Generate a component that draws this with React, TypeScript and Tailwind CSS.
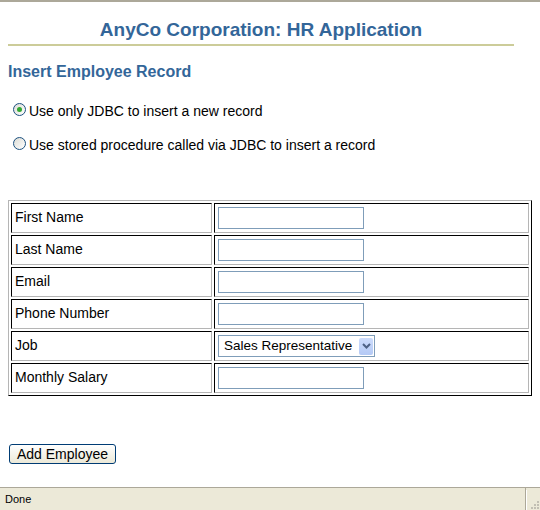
import { useState } from "react";

const fields = ["First Name", "Last Name", "Email", "Phone Number", "Job", "Monthly Salary"];

const Radio = ({ checked }: { checked: boolean }) => (
  <span className="w-[13px] h-[13px] rounded-full border border-[#1c5180] bg-gradient-to-br from-[#dcdcd5] to-white flex items-center justify-center shrink-0">
    {checked && <span className="w-[5px] h-[5px] rounded-full bg-[#31a831]" />}
  </span>
);

const JobSelect = () => (
  <div className="w-[157px] h-[22px] border border-[#7f9db9] bg-white flex items-center justify-between pl-[5px] pr-[1px]">
    <span className="text-[13.5px] leading-[16px] text-black">Sales Representative</span>
    <span className="w-[14px] h-[17px] rounded-[2px] bg-gradient-to-b from-[#cddcfc] to-[#b4c9f5] flex items-center justify-center">
      <svg width="9" height="6" viewBox="0 0 9 6">
        <path d="M1 1 L4.5 4.5 L8 1" fill="none" stroke="#4d6185" strokeWidth="2" />
      </svg>
    </span>
  </div>
);

const App = () => {
  const [mode, setMode] = useState("jdbc");

  return (
    <div className="w-[540px] h-[510px] flex font-['Liberation_Sans',Arial,sans-serif] text-black overflow-hidden">
      <div className="flex-1 flex flex-col border-t-2 border-[#aca899] bg-white">
        {/* Page content */}
        <div className="flex-1 px-[8px]">
          <div className="w-[506px]">
            <h1 className="mt-[17px] text-center text-[19px] leading-[22px] font-bold text-[#336699]">
              AnyCo Corporation: HR Application
            </h1>
            <div className="mt-[3px] h-[2px] bg-[#cccc99]" />
          </div>

          <h2 className="mt-[17px] text-[16px] leading-[18px] font-bold text-[#336699]">
            Insert Employee Record
          </h2>

          <div className="mt-[22px] flex flex-col gap-[18px] text-[14px] leading-[16px]">
            {[
              { id: "jdbc", label: "Use only JDBC to insert a new record" },
              { id: "proc", label: "Use stored procedure called via JDBC to insert a record" },
            ].map((o) => (
              <label key={o.id} className="flex items-start gap-[3px] pl-[5px] cursor-default" onClick={() => setMode(o.id)}>
                <Radio checked={mode === o.id} />
                <span>{o.label}</span>
              </label>
            ))}
          </div>

          {/* Form table */}
          <div className="mt-[47px] w-[524px] border border-t-[#b5b5b5] border-l-[#b5b5b5] border-b-black border-r-black p-[2px] grid grid-cols-[201px_315px] gap-[2px]">
            {fields.map((f) => (
              <div key={f} className="contents">
                <div className="h-[30px] border border-t-black border-l-black border-b-[#b5b5b5] border-r-[#b5b5b5] px-[3px] flex items-center text-[14px] leading-[16px] pb-[2px]">
                  {f}
                </div>
                <div className="h-[30px] border border-t-black border-l-black border-b-[#b5b5b5] border-r-[#b5b5b5] px-[3px] flex items-center">
                  {f === "Job" ? (
                    <JobSelect />
                  ) : (
                    <input type="text" className="w-[146px] h-[22px] border border-[#7f9db9] bg-white outline-none" />
                  )}
                </div>
              </div>
            ))}
          </div>

          <button className="mt-[48px] ml-[1px] w-[107px] h-[20px] rounded-[3px] border border-[#003c74] bg-gradient-to-b from-white to-[#ece9d8] text-[14px] leading-[16px] text-black">
            Add Employee
          </button>
        </div>

        {/* Status bar */}
        <div className="h-[23px] border-t border-[#aca899] bg-[#ece9d8] flex items-stretch">
          <span className="flex-1 pl-[5px] pt-[5px] text-[11px] leading-[13px]">Done</span>
          <div className="w-[15px] border-l border-l-[#aca899] flex items-end justify-end relative">
            <div className="absolute left-0 top-[2px] bottom-0 w-px bg-white" />
            <svg width="11" height="8" viewBox="0 0 11 8" className="mb-[1px]">
              <rect x="8" y="0" width="2" height="2" fill="#c2bfb3" />
              <rect x="5" y="3" width="2" height="2" fill="#c2bfb3" />
              <rect x="8" y="3" width="2" height="2" fill="#c2bfb3" />
              <rect x="2" y="6" width="2" height="2" fill="#c2bfb3" />
              <rect x="5" y="6" width="2" height="2" fill="#c2bfb3" />
              <rect x="8" y="6" width="2" height="2" fill="#c2bfb3" />
            </svg>
          </div>
        </div>
      </div>
      <div className="w-[3px] bg-[#0b3fd8]" />
    </div>
  );
};

export default App;
